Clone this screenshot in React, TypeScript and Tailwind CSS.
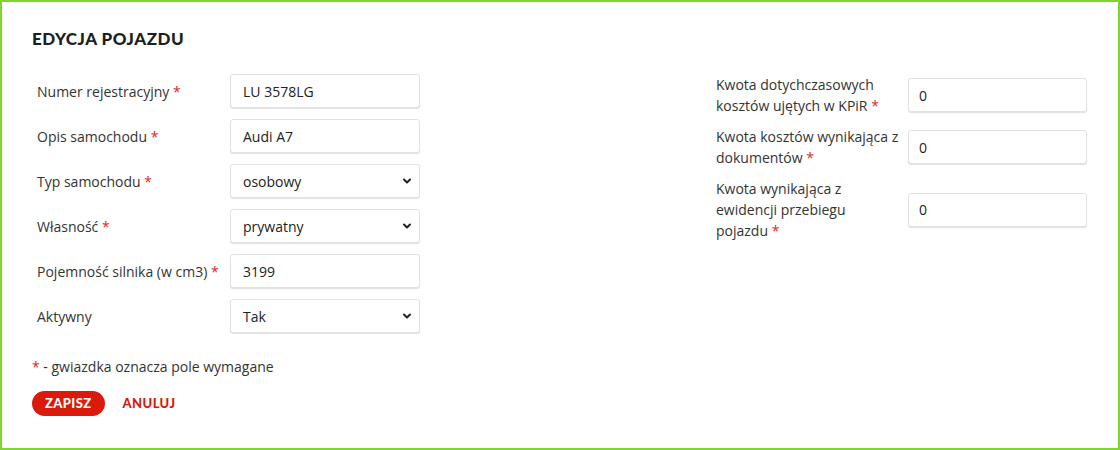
import { ChevronDown } from "lucide-react";

const leftFields = [
  { label: "Numer rejestracyjny", value: "LU 3578LG", select: false, required: true },
  { label: "Opis samochodu", value: "Audi A7", select: false, required: true },
  { label: "Typ samochodu", value: "osobowy", select: true, required: true },
  { label: "Własność", value: "prywatny", select: true, required: true },
  { label: "Pojemność silnika (w cm3)", value: "3199", select: false, required: true },
  { label: "Aktywny", value: "Tak", select: true, required: false },
];

const rightFields = [
  { label: "Kwota dotychczasowych kosztów ujętych w KPiR", value: "0" },
  { label: "Kwota kosztów wynikająca z dokumentów", value: "0" },
  { label: "Kwota wynikająca z ewidencji przebiegu pojazdu", value: "0" },
];

const Star = () => <span className="text-[#e3261c]">*</span>;

const inputBox =
  "flex items-center h-[34px] bg-white border border-[#e2e2e2] rounded-[3px] shadow-[0_1px_1px_rgba(0,0,0,0.12)] text-[14px] text-[#222]";

export default function App() {
  return (
    <div className="w-[1120px] h-[450px] bg-white border-2 border-[#7ed62f] font-['Open_Sans',sans-serif] text-[14px] text-[#333]">
      <div className="pl-[30px] pt-[27px]">
        <h1 className="font-['Lato',sans-serif] font-black text-[17px] tracking-[0.5px] text-[#1e1e1e] leading-5 h-5">
          EDYCJA POJAZDU
        </h1>

        <div className="flex mt-[25px]">
          {/* Left column */}
          <div className="w-[684px] flex flex-col gap-[11px]">
            {leftFields.map((f, i) => (
              <div key={i} className="flex items-center">
                <label className="w-[198px] pl-[5px]">
                  {f.label} {f.required && <Star />}
                </label>
                <div className={`${inputBox} w-[190px] pl-3 pr-[6px] justify-between`}>
                  <span>{f.value}</span>
                  {f.select && <ChevronDown size={12} strokeWidth={4} className="text-[#222]" />}
                </div>
              </div>
            ))}
          </div>

          {/* Right column */}
          <div className="flex flex-col gap-[10px]">
            {rightFields.map((f, i) => (
              <div key={i} className="flex items-center">
                <label className="w-[192px] pr-[8px] leading-[21px]">
                  {f.label} <Star />
                </label>
                <div className={`${inputBox} w-[179px] px-[10px]`}>{f.value}</div>
              </div>
            ))}
          </div>
        </div>

        <p className="mt-[23px]">
          <Star /> - gwiazdka oznacza pole wymagane
        </p>

        <div className="flex items-center gap-[18px] mt-[14px]">
          <button className="h-[25px] px-[13px] rounded-full bg-[#da1a0b] text-white font-['Lato',sans-serif] font-black text-[13px] tracking-[0.4px]">
            ZAPISZ
          </button>
          <button className="font-['Lato',sans-serif] font-black text-[13px] tracking-[0.4px] text-[#da1a0b]">
            ANULUJ
          </button>
        </div>
      </div>
    </div>
  );
}
